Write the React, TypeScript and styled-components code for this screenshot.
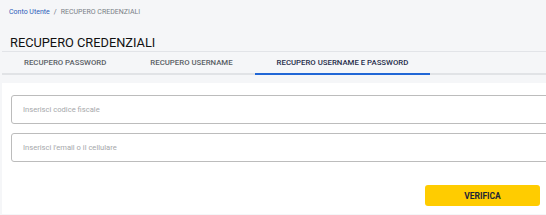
import styled, { createGlobalStyle } from 'styled-components';

const GlobalStyle = createGlobalStyle`
  html, body {
    margin: 0;
    padding: 0;
    background: #f5f6f8;
    overflow: hidden;
  }
  body {
    font-family: Roboto, "Liberation Sans", Arial, sans-serif;
  }
`;

const Page = styled.div`
  padding-left: 2px;
  width: 544px;
`;

const Breadcrumb = styled.nav`
  display: flex;
  align-items: center;
  gap: 4px;
  padding: 7px 0 0 7px;
  height: 10px;
  font-size: 7px;
  color: #6b7280;
`;

const Crumb = styled.a<{ $active?: boolean }>`
  color: ${({ $active }) => ($active ? '#7a7f87' : '#2b5cb8')};
  text-decoration: none;
`;

const Title = styled.h1`
  margin: 17px 0 0 8px;
  height: 17px;
  font-size: 12.8px;
  font-weight: 400;
  color: #111;
  line-height: 17px;
`;

const Tabs = styled.div`
  display: flex;
  height: 21px;
  border-top: 1px solid #e2e4e8;
  border-bottom: 2px solid #e1e3e6;
`;

const Tab = styled.div<{ $active?: boolean }>`
  display: flex;
  align-items: center;
  padding: 0 22px;
  font-size: 7.8px;
  font-weight: 500;
  color: ${({ $active }) => ($active ? '#1f2d4a' : '#5a5f66')};
  border-bottom: 2px solid ${({ $active }) => ($active ? '#2167d6' : 'transparent')};
  margin-bottom: -2px;
  white-space: nowrap;
`;

const Card = styled.form`
  margin-top: 8px;
  background: #fff;
  padding: 12px 0 8px 9px;
  display: flex;
  flex-direction: column;
  gap: 9px;
`;

const Field = styled.input`
  flex-shrink: 0;
  width: 560px;
  height: 29px;
  box-sizing: border-box;
  border: 1px solid #bcbcbc;
  border-radius: 3px;
  padding: 0 11px;
  font-family: inherit;
  font-size: 7.6px;
  color: #333;
  outline: none;
  &::placeholder {
    color: #a6a8ab;
  }
`;

const Actions = styled.div`
  display: flex;
  justify-content: flex-end;
  padding: 14px 6px 0 0;
`;

const Button = styled.button`
  width: 115px;
  height: 21px;
  border: none;
  border-radius: 3px;
  background: #ffcc00;
  color: #1e2636;
  font-family: inherit;
  font-weight: 700;
  font-size: 8.5px;
  cursor: pointer;
`;

export default function App() {
  return (
    <Page>
      <GlobalStyle />
      <Breadcrumb>
        <Crumb href="#">Conto Utente</Crumb>
        <span>/</span>
        <Crumb $active>RECUPERO CREDENZIALI</Crumb>
      </Breadcrumb>
      <Title>RECUPERO CREDENZIALI</Title>
      <Tabs>
        <Tab>RECUPERO PASSWORD</Tab>
        <Tab>RECUPERO USERNAME</Tab>
        <Tab $active>RECUPERO USERNAME E PASSWORD</Tab>
      </Tabs>
      <Card onSubmit={(e) => e.preventDefault()}>
        <Field placeholder="Inserisci codice fiscale" />
        <Field placeholder="Inserisci l'email o il cellulare" />
        <Actions>
          <Button type="submit">VERIFICA</Button>
        </Actions>
      </Card>
    </Page>
  );
}
